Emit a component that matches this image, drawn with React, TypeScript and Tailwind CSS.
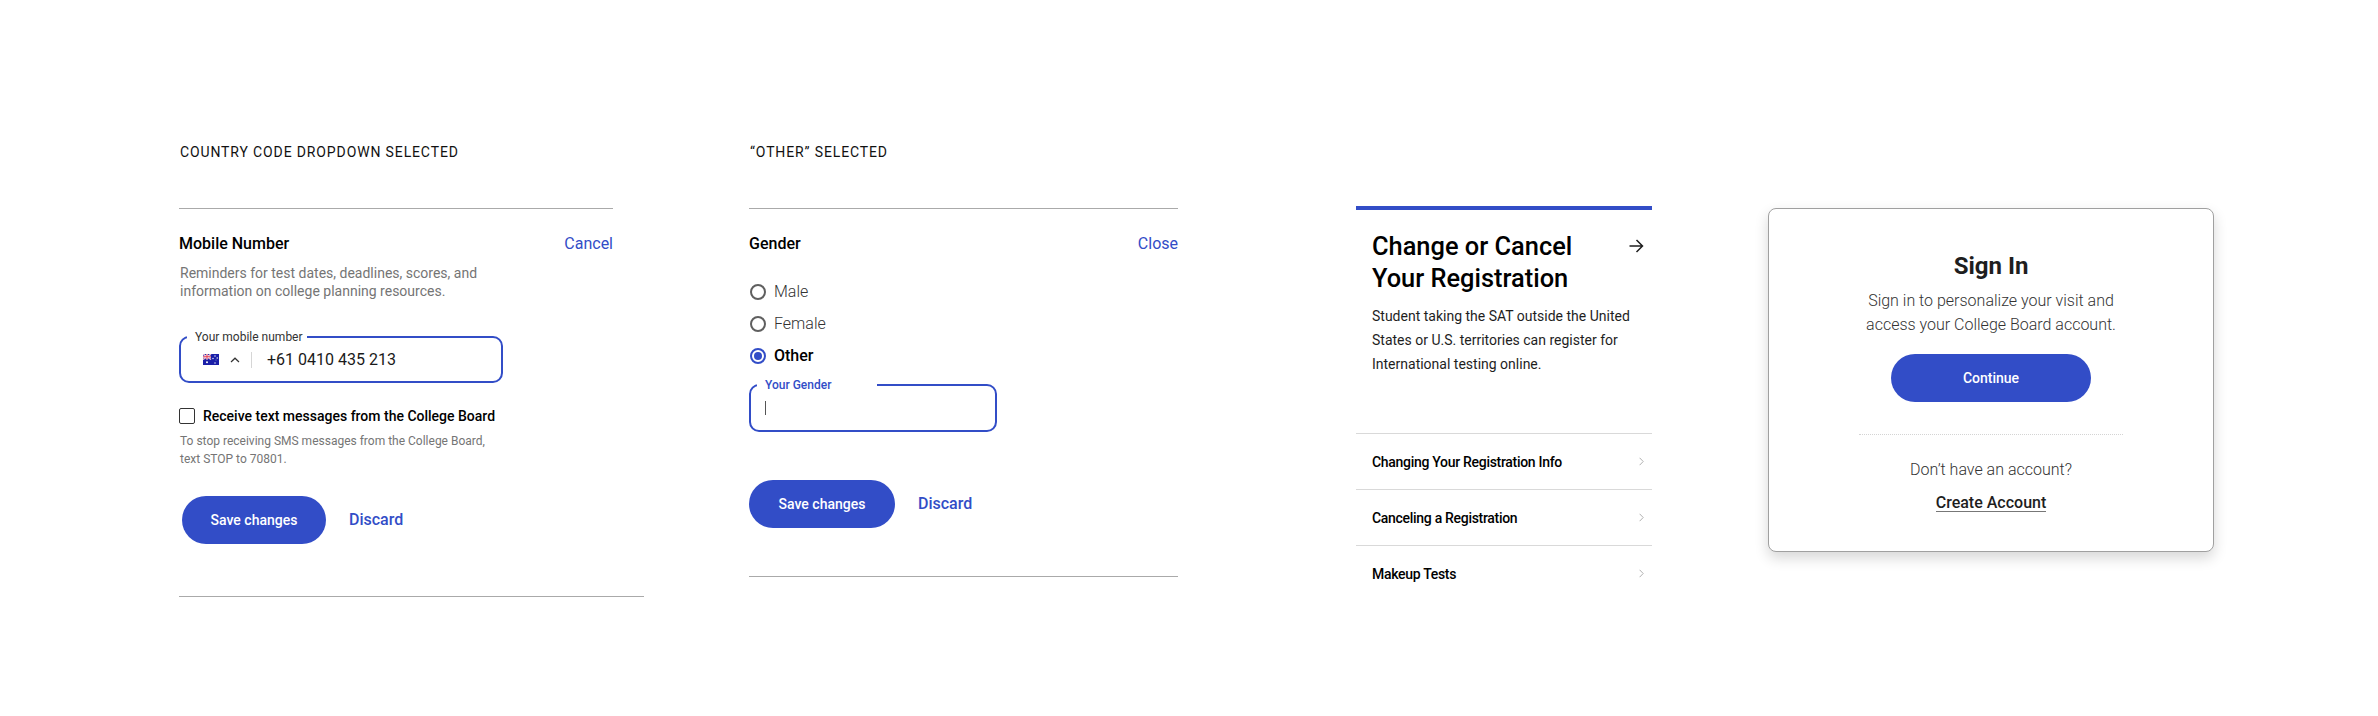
function Flag() {
  return (
    <svg width="16" height="11" viewBox="0 0 16 11" className="shrink-0">
      <rect width="16" height="11" fill="#1a1fa8" />
      <path d="M0 0L8 5.5M8 0L0 5.5" stroke="#fff" strokeWidth="1.2" />
      <path d="M0 0L8 5.5M8 0L0 5.5" stroke="#e3344f" strokeWidth="0.4" />
      <path d="M4 0V5.5M0 2.75H8" stroke="#fff" strokeWidth="1.8" />
      <path d="M4 0V5.5M0 2.75H8" stroke="#e3344f" strokeWidth="1" />
      <circle cx="4" cy="8.3" r="1" fill="#fff" />
      <circle cx="12" cy="2" r="0.7" fill="#fff" />
      <circle cx="12" cy="9" r="0.7" fill="#fff" />
      <circle cx="10" cy="4.5" r="0.7" fill="#fff" />
      <circle cx="14.2" cy="4" r="0.7" fill="#fff" />
      <circle cx="13" cy="6" r="0.4" fill="#fff" />
    </svg>
  )
}

function SaveRow({ btnWidth }: { btnWidth: string }) {
  return (
    <div className="flex items-center gap-[23px]">
      <button className={`h-12 ${btnWidth} rounded-full bg-[#324dc7] text-sm font-medium text-white`}>
        Save changes
      </button>
      <a className="text-base font-medium text-[#324dc7]">Discard</a>
    </div>
  )
}

function Caption({ children }: { children: React.ReactNode }) {
  return (
    <div className="h-[64px] pl-px text-[14px] leading-[16px] tracking-[0.87px] text-[#111111]">{children}</div>
  )
}

function MobileColumn() {
  return (
    <div className="w-[465px] shrink-0">
      <Caption>COUNTRY CODE DROPDOWN SELECTED</Caption>
      <div className="h-px w-[434px] bg-[#aaaaaa]" />
      <div className="mt-[23px] flex w-[434px] items-center justify-between">
        <span className="text-base font-medium text-black">Mobile Number</span>
        <a className="text-base text-[#324dc7]">Cancel</a>
      </div>
      <p className="mt-[8px] pl-px text-sm leading-[18px] text-[#757575]">
        Reminders for test dates, deadlines, scores, and
        <br />
        information on college planning resources.
      </p>
      <div className="relative mt-[36px] flex h-[47px] w-[324px] items-center rounded-[10px] border-2 border-[#324dc7]">
        <span className="absolute -top-[9px] left-[6px] w-[120px] bg-white pl-[8px] text-xs leading-[16px] text-[#333333]">
          Your mobile number
        </span>
        <div className="ml-[22px] flex items-center">
          <Flag />
          <svg width="10" height="6" viewBox="0 0 10 6" fill="none" className="ml-[11px]">
            <path d="M1 5L5 1.2L9 5" stroke="#333" strokeWidth="1.2" />
          </svg>
          <span className="ml-[11px] h-[16px] w-px bg-[#d6d6d6]" />
        </div>
        <span className="ml-[15px] text-base text-[#1a1a1a]">+61 0410 435 213</span>
      </div>
      <label className="mt-[25px] flex items-center gap-2 text-sm font-medium leading-[16px] text-black">
        <span className="size-4 rounded-[2px] border border-[#333333]" />
        Receive text messages from the College Board
      </label>
      <p className="mt-[8px] pl-px text-xs leading-[18px] text-[#757575]">
        To stop receiving SMS messages from the College Board,
        <br />
        text STOP to 70801.
      </p>
      <div className="mt-[28px] ml-[3px]">
        <SaveRow btnWidth="w-[144px]" />
      </div>
      <div className="mt-[52px] h-px bg-[#aaaaaa]" />
    </div>
  )
}

function Radio({ label, checked }: { label: string; checked?: boolean }) {
  return (
    <div className="flex h-8 items-center gap-2 pl-px">
      {checked ? (
        <span className="flex size-4 items-center justify-center rounded-full border-2 border-[#324dc7]">
          <span className="size-2 rounded-full bg-[#324dc7]" />
        </span>
      ) : (
        <span className="size-4 rounded-full border-2 border-[#5f5f5f]" />
      )}
      <span className={checked ? 'text-base font-medium text-black' : 'text-base font-light text-[#333333]'}>
        {label}
      </span>
    </div>
  )
}

function GenderColumn() {
  return (
    <div className="ml-[105px] w-[429px] shrink-0">
      <Caption>“OTHER” SELECTED</Caption>
      <div className="h-px bg-[#aaaaaa]" />
      <div className="mt-[23px] flex items-center justify-between">
        <span className="text-base font-medium text-black">Gender</span>
        <a className="text-base text-[#324dc7]">Close</a>
      </div>
      <div className="mt-[20px]">
        <Radio label="Male" />
        <Radio label="Female" />
        <Radio label="Other" checked />
      </div>
      <div className="relative mt-[12px] h-[48px] w-[248px] rounded-[10px] border-2 border-[#324dc7]">
        <span className="absolute -top-[9px] left-[6px] w-[120px] bg-white pl-[8px] text-xs font-medium leading-[16px] text-[#324dc7]">
          Your Gender
        </span>
        <span className="absolute top-[15px] left-[14px] h-[14px] w-px bg-[#555555]" />
      </div>
      <div className="mt-[48px]">
        <SaveRow btnWidth="w-[146px]" />
      </div>
      <div className="mt-[48px] h-px bg-[#aaaaaa]" />
    </div>
  )
}

function RegistrationColumn() {
  const links = ['Changing Your Registration Info', 'Canceling a Registration', 'Makeup Tests']
  return (
    <div className="ml-[178px] w-[296px] shrink-0 pt-[62px]">
      <div className="h-[4px] bg-[#324dc7]" />
      <div className="flex items-start justify-between pl-4 pr-2 pt-[20px]">
        <h2 className="text-[25.4px] font-medium leading-[32px] text-black">
          Change or Cancel
          <br />
          Your Registration
        </h2>
        <svg width="16" height="16" viewBox="0 0 16 16" fill="none" className="mt-[8px]">
          <path d="M1.5 8H14.5M8.5 2L14.5 8L8.5 14" stroke="#1e1e1e" strokeWidth="1.5" />
        </svg>
      </div>
      <p className="mt-[10px] pl-4 text-sm leading-[24px] text-[#1e1e1e]">
        Student taking the SAT outside the United
        <br />
        States or U.S. territories can register for
        <br />
        International testing online.
      </p>
      <div className="mt-[57px]">
        {links.map((link) => (
          <div key={link} className="flex h-[56px] items-center justify-between border-t border-[#d9d9d9] pl-4 pr-2">
            <span className="text-sm font-medium tracking-[-0.3px] text-black">{link}</span>
            <svg width="5" height="9" viewBox="0 0 5 9" fill="none">
              <path d="M0.6 0.8L4.2 4.5L0.6 8.2" stroke="#b0b0b0" />
            </svg>
          </div>
        ))}
      </div>
    </div>
  )
}

function SignInCard() {
  return (
    <div className="ml-[116px] mt-[64px] flex h-[344px] w-[446px] shrink-0 flex-col items-center rounded-[8px] border border-[#a0a0a0] bg-white pt-[41px] shadow-[0_6px_14px_rgba(0,0,0,0.16)]">
      <h2 className="text-2xl font-bold leading-[32px] text-[#1e1e1e]">Sign In</h2>
      <p className="mt-[7px] text-center text-base font-light leading-[24px] text-[#333333]">
        Sign in to personalize your visit and
        <br />
        access your College Board account.
      </p>
      <button className="mt-[17px] h-12 w-[200px] rounded-full bg-[#324dc7] text-sm font-medium text-white">
        Continue
      </button>
      <div className="mt-[32px] w-[264px] border-t border-dotted border-[#d4d4d4]" />
      <p className="mt-[23px] text-base font-light leading-[24px] text-[#333333]">Don’t have an account?</p>
      <a className="mt-[12px] border-b border-[#777777] text-base font-medium leading-[17px] text-[#1e1e1e]">
        Create Account
      </a>
    </div>
  )
}

export default function App() {
  return (
    <div className="flex h-[716px] w-full items-start bg-white pl-[179px] pt-[144px] font-['Roboto',sans-serif]">
      <MobileColumn />
      <GenderColumn />
      <RegistrationColumn />
      <SignInCard />
    </div>
  )
}
